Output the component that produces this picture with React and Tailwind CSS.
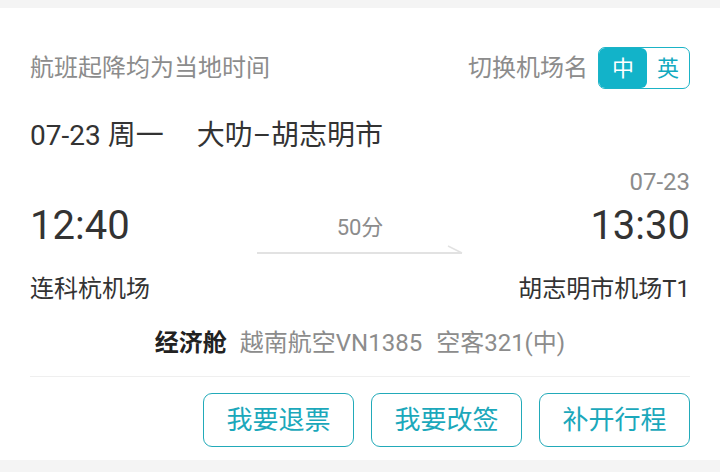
import React from 'react'

const FONT = { fontFamily: 'Roboto, "Noto Sans CJK SC", sans-serif' }

export default function App() {
  return (
    <div className="w-[720px] h-[472px] bg-[#f4f4f4] pt-[8px] overflow-hidden" style={FONT}>
      <div className="bg-white h-[452px] px-[30px] flex flex-col">
        {/* header */}
        <div className="mt-[38px] h-[44px] flex items-center justify-between">
          <span className="text-[24px] text-[#8c8c8c] leading-none">航班起降均为当地时间</span>
          <div className="flex items-center">
            <span className="text-[24px] text-[#8c8c8c] leading-none mr-[10px]">切换机场名</span>
            <div className="flex h-[42px] w-[92px] rounded-[7px] border border-[#1bb3c6] overflow-hidden">
              <div className="w-[48px] bg-[#12b3c9] text-white text-[22px] flex items-center justify-center rounded-r-[6px]">中</div>
              <div className="flex-1 text-[#12aabf] text-[22px] flex items-center justify-center">英</div>
            </div>
          </div>
        </div>

        {/* route */}
        <div className="mt-[28px] h-[36px] flex items-center text-[28px] text-[#333] leading-none">
          <span>07-23 周一</span>
          <span className="ml-[33px]">大叻–胡志明市</span>
        </div>

        {/* arrival date */}
        <div className="mt-[16px] h-[24px] flex items-center justify-end text-[24px] text-[#8c8c8c] leading-none">
          07-23
        </div>

        {/* times */}
        <div className="mt-[8px] h-[48px] grid grid-cols-[1fr_206px_1fr] items-start">
          <span className="h-[48px] flex items-center text-[40px] text-[#333] leading-none">12:40</span>
          <div className="flex flex-col items-center">
            <span className="mt-[14px] h-[24px] flex items-center text-[22px] text-[#8c8c8c] leading-none">50分</span>
            <svg width="206" height="12" viewBox="0 0 206 12" className="mt-[2px]">
              <line x1="0" y1="11" x2="205" y2="11" stroke="#e2e2e2" strokeWidth="2" />
              <line x1="205" y1="11" x2="191" y2="4" stroke="#e2e2e2" strokeWidth="1.5" />
            </svg>
          </div>
          <span className="h-[48px] flex items-center justify-end text-[40px] text-[#333] leading-none">13:30</span>
        </div>

        {/* airports */}
        <div className="mt-[25px] h-[28px] flex items-center justify-between text-[24px] text-[#333] leading-none">
          <span>连科杭机场</span>
          <span>胡志明市机场T1</span>
        </div>

        {/* cabin */}
        <div className="mt-[26px] h-[28px] flex items-center justify-center leading-none">
          <span className="text-[24px] font-bold text-[#222]">经济舱</span>
          <span className="ml-[13px] text-[24px] text-[#8c8c8c]">越南航空VN1385</span>
          <span className="ml-[14px] text-[24px] text-[#8c8c8c]">空客321(中)</span>
        </div>

        <div className="mt-[19px] border-t border-[#efefef]" />

        {/* actions */}
        <div className="mt-[16px] flex justify-end gap-[17px]">
          {['我要退票', '我要改签', '补开行程'].map(t => (
            <button
              key={t}
              className="w-[151px] h-[54px] rounded-[9px] border-[1.5px] border-[#22aab9] text-[#1ba8bb] text-[26px] flex items-center justify-center"
            >
              {t}
            </button>
          ))}
        </div>
      </div>
    </div>
  )
}
